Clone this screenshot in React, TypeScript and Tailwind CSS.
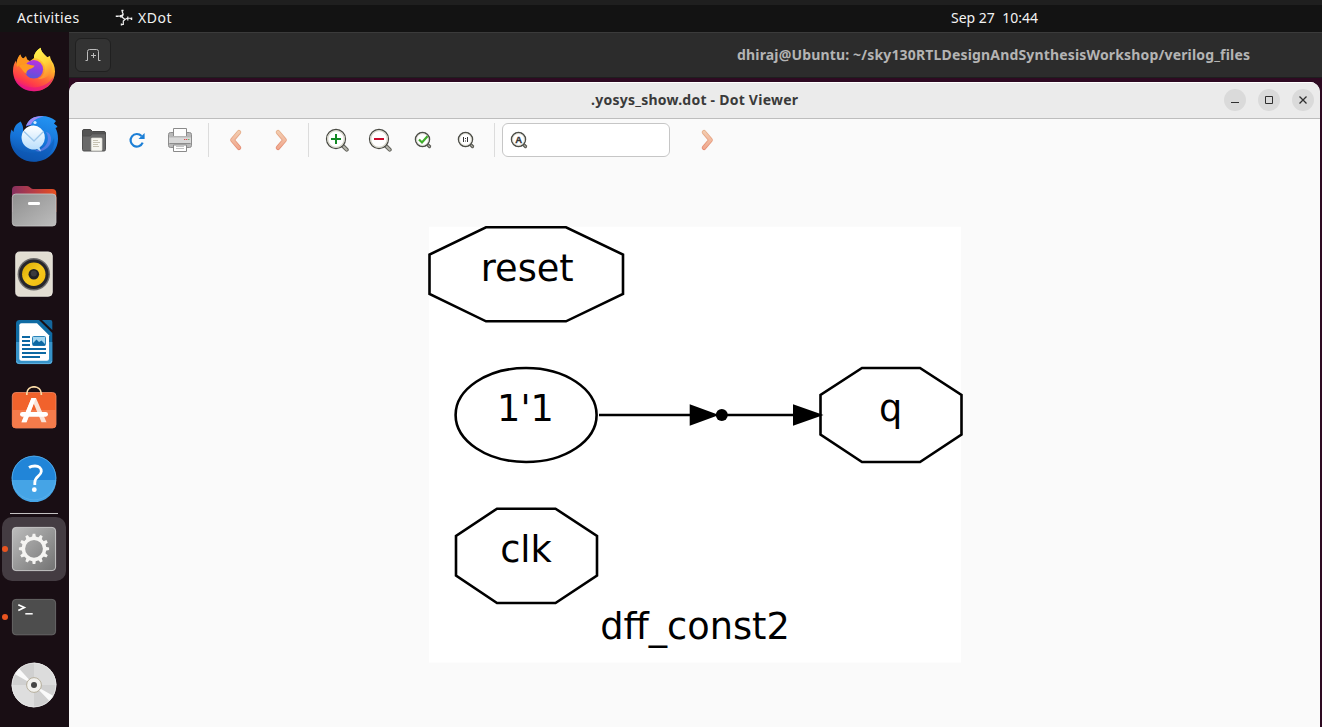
import type { ReactNode } from "react";

function Firefox() {
  return (
    <svg viewBox="0 0 48 48" className="size-12">
      <defs>
        <linearGradient id="fxBody" x1="0.8" y1="0.05" x2="0.35" y2="1">
          <stop offset="0" stopColor="#fff44f" />
          <stop offset="0.35" stopColor="#ffb42a" />
          <stop offset="0.6" stopColor="#ff6a35" />
          <stop offset="0.82" stopColor="#ff3a4a" />
          <stop offset="1" stopColor="#e8108a" />
        </linearGradient>
        <linearGradient id="fxGlobe" x1="0.6" y1="0" x2="0.4" y2="1">
          <stop offset="0" stopColor="#b833e1" />
          <stop offset="0.5" stopColor="#8a3fe0" />
          <stop offset="1" stopColor="#5a55d8" />
        </linearGradient>
        <linearGradient id="fxFlame" x1="0.3" y1="0" x2="0.6" y2="1">
          <stop offset="0" stopColor="#fff44f" />
          <stop offset="0.5" stopColor="#ffd53a" />
          <stop offset="1" stopColor="#ff8a2e" />
        </linearGradient>
      </defs>
      <path d="M10.3 8.5C11 11 12 12 13.5 12.5L16 10.3C16.3 13 17.5 14.5 20 15L24 12C23.5 8 27 4 30.7 1.7C31 6 34 8 36.5 11.5L40 10C40 13 42 15 43.5 18C45.5 23 45.5 28 43.5 33C40 41 32.500 45.200 24 45.200C13 45.200 3.200 37 3 25C3 20 4.300 17 6 14.500L6.200 18C7 13.500 8.500 10.500 10.300 8.500Z" fill="url(#fxBody)" />
      <path d="M30.700 1.700C26.500 4 24 8 24 12C28 12 33 15 34.500 20C36 26 33 31 28 33C36 33.500 42 28 42 20C42 15 38 12 34.500 8.500C32.500 6.500 31 5 30.700 1.700Z" fill="url(#fxFlame)" />
      <circle cx="23.800" cy="23.300" r="9.300" fill="url(#fxGlobe)" />
      <path d="M9 20C11 17.500 15 17 19 18.500C21 19.300 23 19.500 24.500 19.600C24 22 21 22.600 19 23.500C17 24.500 16 26 16.500 28C13 26 12 22.500 9 20Z" fill="#ff9a22" />
      <path d="M10.300 8.500C11 11 12 12 13.500 12.500L16 10.300C16.300 13 17.500 14.500 20 15C17 15.500 15 17 14.500 19C12 18 9 19 7 21C6 16 8 11 10.300 8.500Z" fill="#ff9620" />
      <path d="M4 31C8 38 16 42 25 41.500C34 41 40 36 43.500 31C41 40 33 45.200 24 45.200C14 45.200 6 39.500 4 31Z" fill="#e31587" opacity=".6" />
    </svg>
  );
}

function Thunderbird() {
  return (
    <svg viewBox="0 0 48 48" className="size-12">
      <defs>
        <linearGradient id="tbBody" x1="0.7" y1="0" x2="0.4" y2="1">
          <stop offset="0" stopColor="#2393f2" />
          <stop offset="0.55" stopColor="#1573d8" />
          <stop offset="1" stopColor="#0c4fa4" />
        </linearGradient>
        <linearGradient id="tbMail" x1="0" y1="0" x2="0" y2="1">
          <stop offset="0" stopColor="#ffffff" />
          <stop offset="1" stopColor="#b4dcfb" />
        </linearGradient>
      </defs>
      <path d="M10.700 7.500C6 10 4 13 3.500 18L1.500 15.500C-1 22 0 30 3 35.500C7 43 15 47.800 24 47.800C37 47.800 47.700 38 48 25C48 20 47 17 45.500 14L47.500 13C46.500 11 45 10.500 44 9.500L46 7C41 3 35 1.500 29 2.300C22 3 17.500 7 16 12.500C18 11.500 20 11.300 21 12C17 14 14 17 13.500 20C13 16 14 13 10.700 7.500Z" fill="url(#tbBody)" />
      <path d="M16 12.500C17.500 7 22 3 29 2.300L34 2.400C28 3.500 23 6 21 10.500C19 11 17 11.500 16 12.500Z" fill="#a08af5" />
      <path d="M1 27C6 38 17 40.500 28 38C36 36 42 31 44 24C46 34 38 46 24 47.700C11 47.500 1 38 1 27Z" fill="#0d58b5" opacity=".5" />
      <path d="M36 18C41 26 36 36 25 36.500C32 40 42 33 41 24C40.500 20 38 18 36 18Z" fill="#a08af5" opacity=".45" />
      <path d="M23.700 11.500A12 12 0 1 0 27 35L31 37.500L29.500 33.500A12 12 0 0 0 23.700 11.500Z" fill="url(#tbMail)" />
      <path d="M14 17.500L24 27L33.500 17.500" fill="none" stroke="#9cc6ea" strokeWidth="1.300" />
      <circle cx="25" cy="8.500" r="1.600" fill="#d6edff" />
    </svg>
  );
}

function Files() {
  return (
    <svg viewBox="0 0 48 48" className="size-12">
      <defs>
        <linearGradient id="flBack" x1="0" y1="0" x2="1" y2="0">
          <stop offset="0" stopColor="#86305f" />
          <stop offset="0.5" stopColor="#b93d46" />
          <stop offset="1" stopColor="#e8501f" />
        </linearGradient>
        <linearGradient id="flFront" x1="0" y1="0" x2="1" y2="1">
          <stop offset="0" stopColor="#8f8f8f" />
          <stop offset="1" stopColor="#bdbdbd" />
        </linearGradient>
      </defs>
      <path d="M2 8Q2 4 6 4H17C20 4 20.500 7 23 7H42Q46.300 7 46.300 11V30H2Z" fill="url(#flBack)" />
      <rect x="2.300" y="12" width="43.700" height="32" rx="3.500" fill="url(#flFront)" stroke="#c8c8c8" strokeWidth=".8" />
      <rect x="18" y="20" width="12" height="3" rx="1.300" fill="#fff" />
    </svg>
  );
}

function Rhythmbox() {
  return (
    <svg viewBox="0 0 48 48" className="size-12">
      <defs>
        <linearGradient id="rbCone" x1="0" y1="0" x2="1" y2="1">
          <stop offset="0" stopColor="#d9a900" />
          <stop offset="0.5" stopColor="#f6c91f" />
          <stop offset="1" stopColor="#f0b90b" />
        </linearGradient>
      </defs>
      <rect x="5.700" y="1.900" width="36.600" height="44.400" rx="4" fill="#e2ddd2" stroke="#f4f1ea" strokeWidth=".8" />
      <circle cx="23.800" cy="24.200" r="16.200" fill="#6d6b6b" />
      <circle cx="23.800" cy="24.200" r="14.800" fill="#27262b" />
      <circle cx="23.800" cy="24.200" r="11.700" fill="url(#rbCone)" />
      <circle cx="23.800" cy="24.200" r="5.300" fill="#202224" />
      <circle cx="23.800" cy="23.500" r="3" fill="#3a3b3d" />
    </svg>
  );
}

function Writer() {
  return (
    <svg viewBox="0 0 48 48" className="size-12">
      <path d="M9.500 2H29L42.300 15V42.500Q42.300 46 38.800 46H9.500Q6 46 6 42.500V5.500Q6 2 9.500 2Z" fill="#0f6ba3" />
      <path d="M6 24H42.300V42.500Q42.300 46 38.800 46H9.500Q6 46 6 42.500Z" fill="#3793c9" />
      <path d="M6.500 43Q6.800 45.600 9.500 45.600H38.800Q41.500 45.600 41.900 43" fill="none" stroke="#6cb8e2" strokeWidth=".8" />
      <path d="M11.500 5.300H27L39 17.300V40.700Q39 42.700 37 42.700H11.500Q9.300 42.700 9.300 40.700V7.300Q9.300 5.300 11.500 5.300Z" fill="#fff" />
      <path d="M32 2H40.500Q42.300 2 42.300 4V12Z" fill="#14669c" />
      <path d="M12 19H20M12 23H20M12 27H20M12 31H36M12 35H36M12 39H30" stroke="#0c68a3" strokeWidth="2" />
      <rect x="22.500" y="18.500" width="13" height="9" rx="1" fill="#a3d6f0" stroke="#2a83b8" />
      <path d="M23 27.500V25L26.500 21.500L29 24L31.500 22.500L35 26V27.500Z" fill="#0c68a3" />
    </svg>
  );
}

function Software() {
  return (
    <svg viewBox="0 0 48 48" className="size-12">
      <rect x="2.300" y="6.500" width="43.700" height="35.500" rx="3.500" fill="#f1622c" stroke="#f58a63" strokeWidth=".8" />
      <path d="M2.300 24H46V38.500Q46 42 42.500 42H5.800Q2.300 42 2.300 38.500Z" fill="#f47b4b" />
      <path d="M16.800 9V7.500C17 3.500 20 .8 24 .8C28 .8 31 3.500 31.300 7.500V9" fill="none" stroke="#f8d9a5" strokeWidth="1.700" />
      <path d="M21.500 12H26L36.500 36.300H31.500L23.700 17.500L16.500 36.300H11.500Z" fill="#fae3d8" />
      <path d="M21.500 12H26L16.500 36.300H11.500Z" fill="#fff" />
      <rect x="10" y="26" width="28" height="4.700" rx="2.350" fill="#fff" />
    </svg>
  );
}

function Help() {
  return (
    <svg viewBox="0 0 48 48" className="size-12">
      <circle cx="24" cy="24" r="22.300" fill="#2185d8" />
      <path d="M1.700 26H46.300A22.300 22.300 0 0 1 1.700 26Z" fill="#45a4e6" />
      <circle cx="24" cy="24" r="21.900" fill="none" stroke="#5ab0ea" strokeWidth=".8" />
      <path d="M19 13.500C20.500 12.500 23 12 25 12C29 12 31.500 14.300 31.300 17.500C31 22 24.800 22.500 24.800 28.500V31" fill="none" stroke="#fff" strokeWidth="2.800" />
      <circle cx="24.300" cy="35.700" r="2.400" fill="#fff" />
    </svg>
  );
}

const teeth = [0, 30, 60, 90, 120, 150, 180, 210, 240, 270, 300, 330];

function Settings() {
  return (
    <svg viewBox="0 0 48 48" className="size-12">
      <defs>
        <linearGradient id="stBg" x1="0" y1="0" x2="1" y2="1">
          <stop offset="0" stopColor="#bdbdbd" />
          <stop offset="1" stopColor="#727272" />
        </linearGradient>
      </defs>
      <rect x="2.400" y="2.400" width="43.200" height="43.200" rx="3.500" fill="url(#stBg)" stroke="#d0d0d0" strokeWidth=".9" />
      <circle cx="24" cy="23.800" r="10.600" fill="none" stroke="#f5f4f2" strokeWidth="3.400" />
      {teeth.map((a) => (
        <path key={a} d="M22 12.500L22.700 8.700H25.300L26 12.500Z" fill="#f5f4f2" transform={`rotate(${a} 24 23.800)`} />
      ))}
    </svg>
  );
}

function Terminal() {
  return (
    <svg viewBox="0 0 48 48" className="size-12">
      <rect x="2.400" y="6.400" width="43.200" height="35.400" rx="3.500" fill="#4d4d4d" stroke="#6c6c6c" strokeWidth=".9" />
      <path d="M8.300 11.800L14.300 14.600L8.300 17.400" fill="none" stroke="#fff" strokeWidth="1.700" />
      <path d="M15.300 20.800H22.700" stroke="#fff" strokeWidth="1.500" />
    </svg>
  );
}

function Disc() {
  return (
    <svg viewBox="0 0 48 48" className="size-12">
      <circle cx="24" cy="24" r="22.300" fill="#d0d0d0" />
      <path d="M24 24L24 1.700A22.300 22.300 0 0 1 46.300 24Z" fill="#dcdcdc" />
      <path d="M24 24L24 46.300A22.300 22.300 0 0 1 1.700 24Z" fill="#dedede" />
      <path d="M24 24L4.700 13L9 7.500ZM24 24L43.500 35L39.500 40Z" fill="#fafafa" />
      <circle cx="24" cy="24" r="21.900" fill="none" stroke="#e8e8e8" strokeWidth=".8" />
      <circle cx="24" cy="24" r="7.400" fill="#f2f1ee" stroke="#b0a894" strokeWidth=".9" />
      <circle cx="24" cy="24" r="3" fill="#454545" />
    </svg>
  );
}

function DockItem({ children, running, active }: { children: ReactNode; running?: boolean; active?: boolean }) {
  return (
    <div className="relative flex h-[68px] w-[68px] shrink-0 items-center justify-center">
      {active && <div className="absolute inset-[2px] rounded-[10px] bg-[#443c42]" />}
      {running && <div className="absolute left-[2px] top-[31px] size-[6px] rounded-full bg-[#e95420]" />}
      <div className="relative">{children}</div>
    </div>
  );
}

function Dock() {
  return (
    <nav className="flex w-[69px] shrink-0 flex-col bg-[#190e14] pt-1">
      <DockItem><Firefox /></DockItem>
      <DockItem><Thunderbird /></DockItem>
      <DockItem><Files /></DockItem>
      <DockItem><Rhythmbox /></DockItem>
      <DockItem><Writer /></DockItem>
      <DockItem><Software /></DockItem>
      <DockItem><Help /></DockItem>
      <div className="mb-px ml-[10px] mt-px h-px w-12 shrink-0 bg-[#c4c1c2]" />
      <DockItem running active><Settings /></DockItem>
      <DockItem running><Terminal /></DockItem>
      <DockItem><Disc /></DockItem>
    </nav>
  );
}

function OpenIcon() {
  return (
    <svg viewBox="0 0 24 24" className="size-6">
      <path d="M.5 3Q.5 1.500 2 1.500H8.500L10.500 3.500H22Q23.500 3.500 23.500 5V12H.5Z" fill="#555" stroke="#484848" />
      <path d="M.5 8H8L10.500 5.800H23.500V21.500Q23.500 23 22 23H2Q.5 23 .5 21.500Z" fill="#696969" stroke="#505050" />
      <rect x="9.300" y="10" width="10.700" height="12.700" rx=".8" fill="#f7f6f0" stroke="#dddcd6" strokeWidth=".7" />
      <path d="M11 12.500H16M11 14.500H18M11 16.500H16M11 18.500H17" stroke="#c6c2b2" />
    </svg>
  );
}

function ReloadIcon() {
  return (
    <svg viewBox="0 0 24 24" className="size-6">
      <path d="M17.700 14.700A6.300 6.300 0 1 1 16.500 8" fill="none" stroke="#1c7fd6" strokeWidth="2.200" />
      <path d="M19.600 5V11H13.500Z" fill="#1c7fd6" />
    </svg>
  );
}

function PrintIcon() {
  return (
    <svg viewBox="0 0 24 24" className="size-6">
      <rect x=".5" y="4.500" width="23" height="15" rx="2" fill="#b9b9b9" stroke="#8d8d8d" />
      <path d="M1 9.500H23V15H1Z" fill="#d8d8d8" />
      <path d="M1.500 15.500H22.500" stroke="#8c8c8c" />
      <path d="M5.500 8V.5H18.500V8" fill="#fdfdfd" stroke="#8a8a8a" />
      <path d="M3 8.500H21" stroke="#b4b4b4" />
      <path d="M16 11.500H17.300M18 11.500H19.300" stroke="#dd4b4b" />
      <path d="M20.200 11.500H21.400" stroke="#4fae4f" />
      <path d="M5.500 17H18.500V23.500H5.500Z" fill="#fff" stroke="#8a8a8a" />
      <path d="M8 18.500H16M8 20.500H16" stroke="#c2c2c2" />
    </svg>
  );
}

function Chevron({ left }: { left?: boolean }) {
  return (
    <svg viewBox="0 0 24 24" className="size-6">
      <defs>
        <linearGradient id="chev" gradientUnits="userSpaceOnUse" x1="12" y1="2" x2="12" y2="22">
          <stop offset="0" stopColor="#f3cfb2" />
          <stop offset="1" stopColor="#f0a58c" />
        </linearGradient>
        <linearGradient id="chevEdge" gradientUnits="userSpaceOnUse" x1="12" y1="2" x2="12" y2="22">
          <stop offset="0" stopColor="#e6b48f" />
          <stop offset="1" stopColor="#e58a72" />
        </linearGradient>
      </defs>
      <g fill="none" strokeLinecap="round" strokeLinejoin="round" transform={left ? "translate(24 0) scale(-1 1)" : undefined}>
        <path d="M9 4.200L15.600 12L9 19.800" stroke="url(#chevEdge)" strokeWidth="4.500" />
        <path d="M9 4.200L15.600 12L9 19.800" stroke="url(#chev)" strokeWidth="2.800" />
      </g>
    </svg>
  );
}

function BigLens({ children }: { children: ReactNode }) {
  return (
    <svg viewBox="0 0 24 24" className="size-6">
      <path d="M17.500 17.500L21.700 21.700" stroke="#5f5f58" strokeWidth="4" strokeLinecap="round" />
      <path d="M17.300 17.300L21.700 21.700" stroke="#b4b4aa" strokeWidth="2" strokeLinecap="round" />
      <circle cx="11" cy="11" r="9.500" fill="#fff" stroke="#494a44" strokeWidth="1.300" />
      <circle cx="11" cy="11" r="8.300" fill="none" stroke="#d4d4c6" strokeWidth="1.200" />
      {children}
    </svg>
  );
}

function SmallLens({ children }: { children: ReactNode }) {
  return (
    <svg viewBox="0 0 24 24" className="size-6">
      <path d="M16.500 16.500L18.500 18.500" stroke="#55554f" strokeWidth="3.200" strokeLinecap="round" />
      <path d="M16.500 16.500L18.600 18.600" stroke="#a5a59c" strokeWidth="1.200" strokeLinecap="round" />
      <circle cx="11.500" cy="11.500" r="7" fill="#fff" stroke="#4d4e48" strokeWidth="1.500" />
      <circle cx="11.500" cy="11.500" r="5.900" fill="none" stroke="#d8d8cc" strokeWidth=".8" />
      {children}
    </svg>
  );
}

function Divider() {
  return <div className="h-[34px] w-px shrink-0 bg-[#dcdcdc]" />;
}

function Toolbar() {
  return (
    <div className="flex h-[42px] items-center pl-[13px]">
      <div className="flex gap-[19px]">
        <OpenIcon />
        <ReloadIcon />
        <PrintIcon />
      </div>
      <div className="ml-4 mr-[15px]"><Divider /></div>
      <div className="flex gap-[21px]">
        <Chevron left />
        <Chevron />
      </div>
      <div className="ml-[15px] mr-4"><Divider /></div>
      <div className="flex gap-[19px]">
        <BigLens><path d="M6 11H16M11 6V16" stroke="#138a24" strokeWidth="2" /></BigLens>
        <BigLens><path d="M6 11H16" stroke="#cc0a2a" strokeWidth="2" /></BigLens>
        <SmallLens><path d="M8 11.500L11 14.500L16.500 8.200" fill="none" stroke="#3fae2a" strokeWidth="2.200" /></SmallLens>
        <SmallLens>
          <path d="M9.500 9V14M13.500 9V14" stroke="#333" strokeWidth="1" />
          <path d="M11 10.500H12M11 13H12" stroke="#333" strokeWidth="1.100" />
        </SmallLens>
      </div>
      <div className="ml-4 mr-[7px]"><Divider /></div>
      <div className="flex h-[34px] w-[168px] items-center rounded-[6px] border border-[#c6c6c6] bg-white pl-1">
        <SmallLens>
          <text x="11.600" y="14.900" textAnchor="middle" fontSize="9.500" fontWeight="700" fontFamily="Liberation Sans, sans-serif" fill="#333" stroke="#333" strokeWidth=".3">A</text>
        </SmallLens>
      </div>
      <div className="ml-[25px]"><Chevron /></div>
    </div>
  );
}

function Graph() {
  return (
    <svg viewBox="429 226 532 436" className="ml-[360px] mt-[65px] block h-[436px] w-[532px] overflow-visible">
      <path d="M429 226.700H961V662.500H429Z" fill="#fff" />
      <g fill="none" stroke="#000" strokeWidth="2.600">
        <path d="M486 227.300H566L623 254.500V294L566 321.300H486L429.500 294V254.500Z" />
        <path d="M862 368H920L961.500 395V434.500L920 462H862L820.500 434.500V395Z" />
        <path d="M497 508.700H555.500L597 536V575.500L555.500 603H497L456 575.500V536Z" />
        <ellipse cx="526.100" cy="415" rx="70.500" ry="47" />
        <path d="M599 415H690M722 415H793" />
      </g>
      <path d="M689.700 404.200V425.800L719 415ZM793 404.200V425.800L823.500 415Z" />
      <circle cx="721.800" cy="415" r="6" />
      <g fontFamily="DejaVu Sans, sans-serif" fontSize="36.700" textAnchor="middle" fill="#000">
        <text x="527.300" y="281.400">reset</text>
        <text x="525.500" y="421.400">1'1</text>
        <text x="890.700" y="421.400">q</text>
        <text x="526" y="562.400">clk</text>
        <text x="695" y="639.400">dff_const2</text>
      </g>
    </svg>
  );
}

function WindowButton({ children }: { children: ReactNode }) {
  return (
    <div className="flex size-[22px] items-center justify-center rounded-full bg-[#dadada]">
      <svg viewBox="0 0 22 22" className="size-[22px]" fill="none" stroke="#2f2f2f">{children}</svg>
    </div>
  );
}

export default function App() {
  return (
    <div className="flex h-[727px] w-[1322px] flex-col overflow-hidden bg-[#131313] font-['Noto_Sans',sans-serif]">
      <div className="h-[5px] shrink-0 bg-[#1f1f1f]" />
      <header className="grid h-[27px] shrink-0 grid-cols-[951px_1fr] items-center text-[14px] text-[#f2f2f2]">
        <div className="flex items-center pb-0.5">
          <span className="ml-[17px] w-[98px] tracking-[0.42px]">Activities</span>
          <svg viewBox="0 0 18 18" className="mr-[5px] mt-px size-[18px]" fill="none" stroke="#f0f0f0" strokeWidth="1.200">
            <path d="M7.300 1V3L8.200 5L6 7.200H3M8.200 5.500L7 8L10 10.500L8.300 12V15.500H6.500M10 10.500L12.500 9L16.500 9.500M12.800 7.500V11.500" />
            <path d="M6.500 1.500H8.500M1.500 6.500V8M1 7.200H3M16.500 8.500V11M6.500 14.500V16.500M5.800 6V8.500" strokeWidth="1.500" />
          </svg>
          <span className="tracking-[0.5px]">XDot</span>
        </div>
        <div className="whitespace-pre pb-0.5">Sep 27  10:44</div>
      </header>
      <div className="flex min-h-0 flex-1">
        <Dock />
        <main className="flex min-w-0 flex-1 flex-col bg-[#2e0a22]">
          <div className="flex h-[46px] shrink-0 items-center border-b border-t border-b-[#1e1e1e] border-t-[#3b3b3b] bg-[#2c2c2c] pl-[6px]">
            <div className="flex h-[34px] w-9 items-center justify-center rounded-[6px] border border-[#202020] bg-[#333]">
              <svg viewBox="0 0 16 14" className="h-[14px] w-4" fill="none" stroke="#bcbcbc">
                <path d="M.5 12.500H2.500V3.500Q2.500 1.500 4.500 1.500H11.500Q13.500 1.500 13.500 3.500V12.500H15.500M8.500 5V10M6 7.500H11" />
              </svg>
            </div>
            <div className="ml-[626px] whitespace-nowrap pb-0.5 text-[14px] font-bold tracking-[0.165px] text-[#b4b4b4]">dhiraj@Ubuntu: ~/sky130RTLDesignAndSynthesisWorkshop/verilog_files</div>
          </div>
          <section className="mr-[2px] mt-1 flex min-h-0 flex-1 flex-col overflow-hidden rounded-t-[10px] bg-[#fafafa]">
            <div className="flex h-[37px] shrink-0 items-center border-b border-t border-b-[#bdbdbd] border-t-white bg-[#ebebeb]">
              <div className="w-[1155px] shrink-0 pb-0.5 pl-[522px] text-[14px] font-bold tracking-[0.24px] text-[#3a3a3a]">.yosys_show.dot - Dot Viewer</div>
              <div className="-mt-px flex gap-3">
                <WindowButton><path d="M7 13.500H15" /></WindowButton>
                <WindowButton><path d="M7.500 7.500H14.500V14.500H7.500Z" /></WindowButton>
                <WindowButton><path d="M7.500 7.500L14.500 14.500M14.500 7.500L7.500 14.500" strokeWidth="1.300" /></WindowButton>
              </div>
            </div>
            <Toolbar />
            <Graph />
          </section>
        </main>
      </div>
    </div>
  );
}
